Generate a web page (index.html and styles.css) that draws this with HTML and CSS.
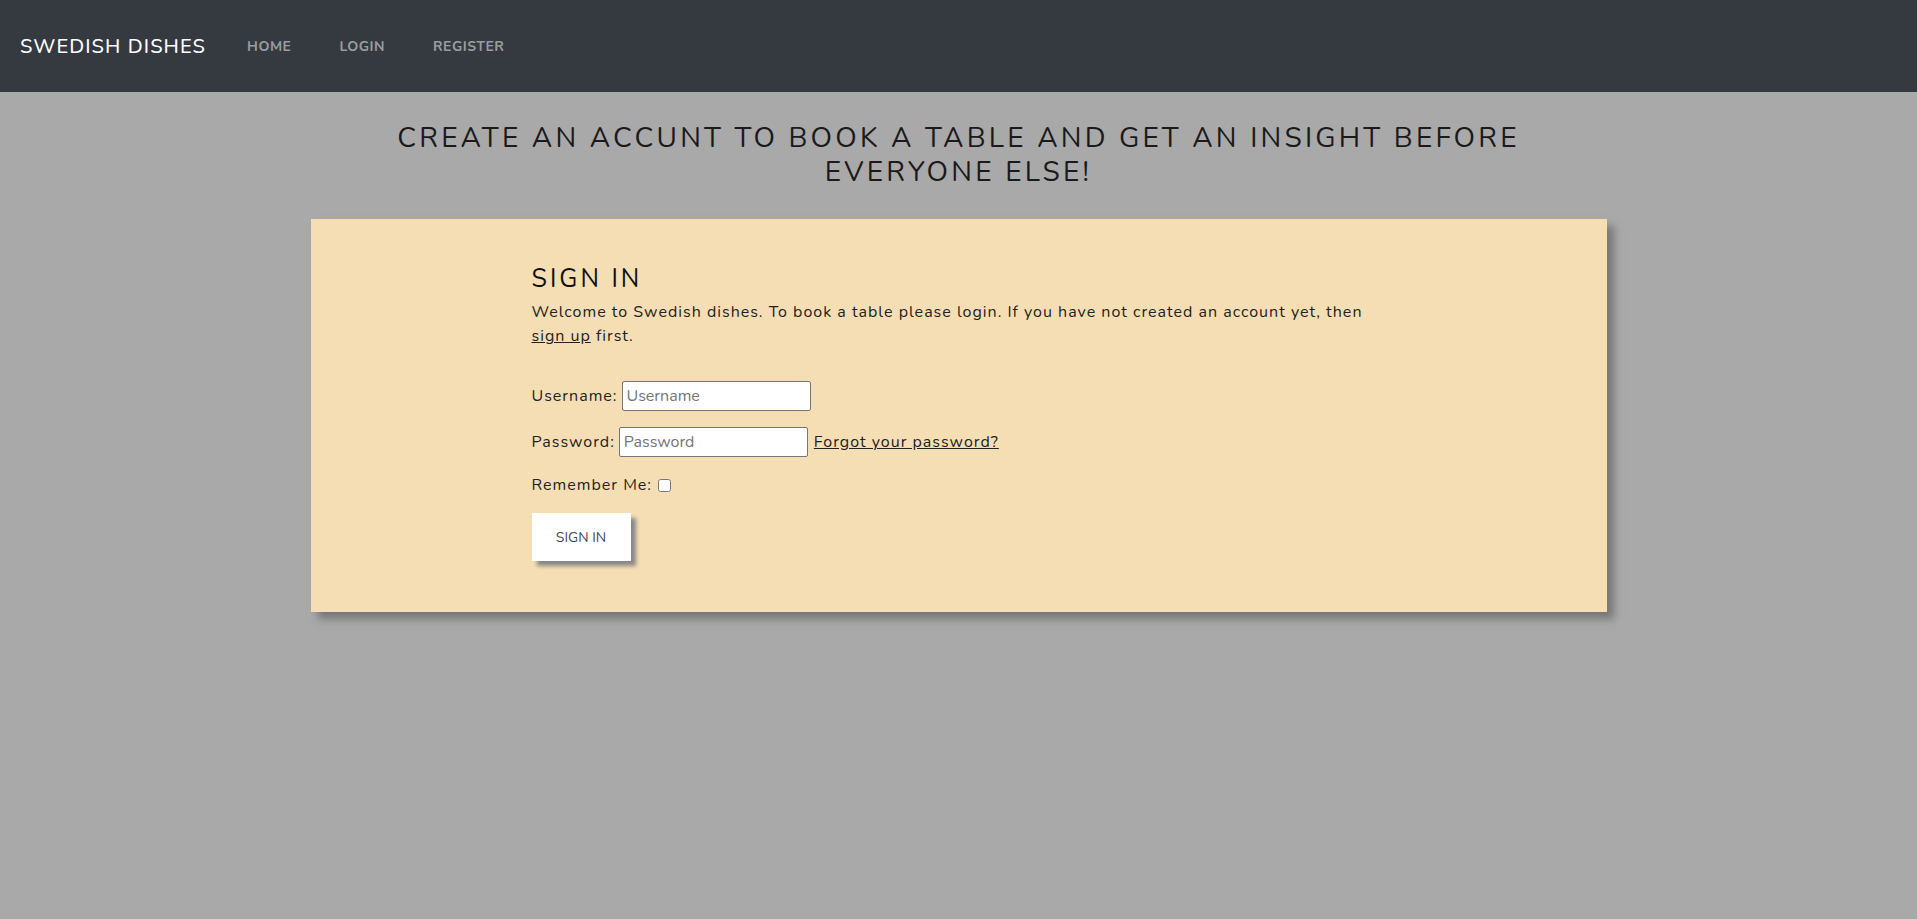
FILE: index.html
```html
<!DOCTYPE html>
<html lang="en">
<head>
<meta charset="utf-8">
<title>Swedish Dishes - Sign In</title>
<link rel="stylesheet" href="styles.css">
</head>
<body>
<nav class="navbar">
  <a class="brand" href="#">SWEDISH DISHES</a>
  <ul class="nav-links">
    <li><a href="#">HOME</a></li>
    <li><a href="#">LOGIN</a></li>
    <li><a href="#">REGISTER</a></li>
  </ul>
</nav>
<main class="page">
  <h2 class="page-title">CREATE AN ACCUNT TO BOOK A TABLE AND GET AN INSIGHT BEFORE EVERYONE ELSE!</h2>
  <section class="card">
    <div class="card-inner">
      <h3 class="card-title">SIGN IN</h3>
      <p class="intro">Welcome to Swedish dishes. To book a table please login. If you have not created an account yet, then <a href="#">sign up</a> first.</p>
      <form class="login-form">
        <p class="field"><label for="u">Username:</label> <input id="u" type="text" placeholder="Username"></p>
        <p class="field"><label for="p">Password:</label> <input id="p" type="password" placeholder="Password"> <a href="#">Forgot your password?</a></p>
        <p class="field field-check"><label for="r">Remember Me:</label> <input id="r" type="checkbox"></p>
        <button type="button" class="btn">SIGN IN</button>
      </form>
    </div>
  </section>
</main>
</body>
</html>
```
FILE: styles.css
```css
* { box-sizing: border-box; }
html, body { margin: 0; padding: 0; }
body {
  background: #a9a9a9;
  font-family: "Nunito", "Open Sans", "Noto Sans", sans-serif;
  color: #212529;
  min-height: 919px;
}
.navbar {
  height: 92px;
  background: #343a40;
  display: flex;
  align-items: center;
  padding: 0 20px;
}
.brand {
  color: #fff;
  text-decoration: none;
  font-size: 20px;
  letter-spacing: 1.1px;
  font-weight: 500;
  margin-right: 17px;
}
.nav-links {
  list-style: none;
  display: flex;
  margin: 0;
  padding: 0;
}
.nav-links a {
  display: block;
  color: #9a9da0;
  text-decoration: none;
  font-size: 14px;
  font-weight: 700;
  letter-spacing: 0.5px;
  padding: 8px 24px;
}
.page {
  padding-top: 29px;
}
.page-title {
  margin: 0 auto;
  max-width: 1160px;
  text-align: center;
  font-size: 28px;
  font-weight: 400;
  line-height: 34px;
  letter-spacing: 3.2px;
  color: #1a1a1a;
}
.card {
  width: 1296px;
  margin: 30px auto 0;
  background: #f5deb3;
  box-shadow: 7px 7px 8px #777;
  padding: 45px 0 51px 221px;
}
.card-inner {
  width: 840px;
}
.card-title {
  margin: 0 0 6px;
  font-size: 25px;
  font-weight: 400;
  letter-spacing: 3px;
  line-height: 30px;
  color: #111;
}
.intro {
  margin: 0 0 33px;
  font-size: 16px;
  line-height: 24px;
  letter-spacing: 1px;
  color: #222;
}
.intro a, .field a { color: #222; }
.field {
  margin: 0 0 16px;
  font-size: 16px;
  letter-spacing: 1px;
  color: #222;
  display: flex;
  align-items: center;
  gap: 4px;
  height: 30px;
}
.field-check {
  height: 24px;
}
.field input[type=text], .field input[type=password] {
  width: 189px;
  height: 30px;
  border: 1px solid #767676;
  border-radius: 2px;
  padding: 2px 4px;
  font-family: inherit;
  font-size: 16px;
  background: #fff;
}
.field input::placeholder { color: #757575; }
.field input[type=checkbox] {
  width: 13px;
  height: 13px;
  margin: 0 0 0 2px;
}
.field a { margin-left: 2px; }
.btn {
  display: block;
  margin: 0;
  width: 99px;
  height: 48px;
  background: #fff;
  border: none;
  box-shadow: 5px 5px 4px #888;
  font-family: inherit;
  font-size: 14px;
  color: #444a55;
  cursor: pointer;
}
```
